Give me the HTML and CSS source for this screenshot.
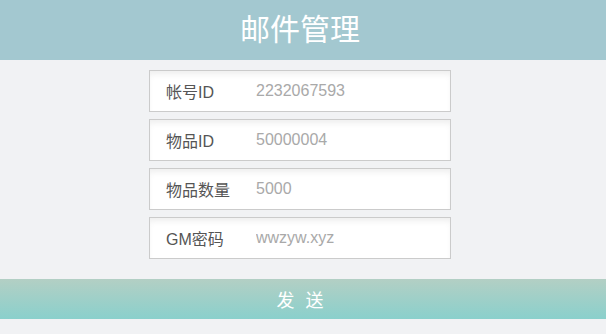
FILE: index.html
```html
<!DOCTYPE html>
<html lang="zh-CN">
<head>
  <meta charset="UTF-8">
  <meta name="viewport" content="width=device-width, initial-scale=1.0">
  <title>邮件管理</title>
<link rel="stylesheet" href="styles.css">
</head>
<body>
<header class="title">邮件管理</header>

<form class="mail-form">
  <div class="row">
    <label>帐号ID</label>
    <input type="text" placeholder="2232067593">
  </div>
  <div class="row">
    <label>物品ID</label>
    <input type="text" placeholder="50000004">
  </div>
  <div class="row">
    <label>物品数量</label>
    <input type="text" placeholder="5000">
  </div>
  <div class="row">
    <label>GM密码</label>
    <input type="text" placeholder="wwzyw.xyz">
  </div>
</form>

<button class="send" type="button">发 送</button>
</body>
</html>
```

FILE: styles.css
```css
* {
  margin: 0;
  padding: 0;
  box-sizing: border-box;
  font-family: "Liberation Sans", "Noto Sans CJK SC", sans-serif;
}
body {
  background: #f1f2f4;
  height: 100vh;
  overflow: hidden;
}
.title {
  height: 60px;
  line-height: 60px;
  padding-right: 6px;
  background: #a3c8d0;
  color: #fff;
  text-align: center;
  font-size: 30px;
}
.mail-form {
  width: 302px;
  margin: 10px 0 0 calc(50% - 154px);

  .row {
    display: flex;
    align-items: center;
    height: 42px;
    margin-bottom: 7px;
    padding-left: 16px;
    background: #fff;
    border: 1px solid #cbcbcb;
    box-shadow: inset 0 5px 6px -2px rgba(0, 0, 0, 0.07);
  }
  label {
    flex: none;
    width: 90px;
    font-size: 16px;
    color: #555;
  }
  input {
    flex: 1;
    min-width: 0;
    border: none;
    outline: none;
    background: transparent;
    font-size: 16px;
    color: #555;
  }
  input::placeholder {
    color: #a9a9a9;
  }
}
.send {
  display: block;
  width: 100%;
  height: 40px;
  margin-top: 20px;
  padding-right: 6px;
  border: none;
  background: linear-gradient(#b3cfc4, #8ad0cc);
  color: #fff;
  font-size: 18px;
  letter-spacing: 3px;
  text-indent: 3px;
}
```
